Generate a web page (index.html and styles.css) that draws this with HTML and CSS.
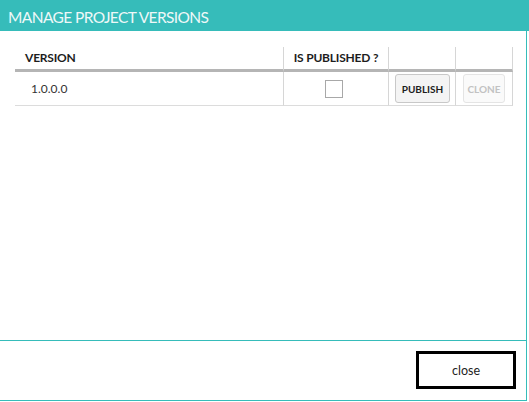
FILE: index.html
```html
<!DOCTYPE html>
<html>
<head>
<meta charset="utf-8">
<link rel="stylesheet" href="styles.css">
</head>
<body>
<div class="dialog">
  <div class="title-bar">MANAGE PROJECT VERSIONS</div>
  <div class="content">
    <div class="grid">
      <div class="cell head">VERSION</div>
      <div class="cell head center">IS PUBLISHED ?</div>
      <div class="cell head"></div>
      <div class="cell head"></div>

      <div class="cell row version">1.0.0.0</div>
      <div class="cell row check-cell"><span class="checkbox"></span></div>
      <div class="cell row btn-cell pub"><button class="btn">PUBLISH</button></div>
      <div class="cell row btn-cell cl"><button class="btn disabled">CLONE</button></div>
    </div>
  </div>
  <div class="footer">
    <button class="close">close</button>
  </div>
</div>
</body>
</html>
```

FILE: styles.css
```css
html, body {
  margin: 0;
  padding: 0;
  background: #fff;
}
body {
  width: 529px;
  height: 402px;
  overflow: hidden;
  font-family: Lato, "Open Sans", sans-serif;
}
.dialog {
  display: flex;
  flex-direction: column;
}
.title-bar {
  height: 31px;
  box-sizing: border-box;
  background: #36bcba;
  color: #eef8f8;
  font-size: 15.5px;
  font-weight: 400;
  line-height: 31px;
  padding: 2px 0 0 8px;
  letter-spacing: -0.6px;
}
.content {
  height: 309px;
  box-sizing: border-box;
  border-right: 1px solid #36bcba;
  width: 527px;
  padding: 16px 0 0 15px;
}
.grid {
  display: grid;
  grid-template-columns: 269px 105px 67px 57px;
  width: 498px;
}
.cell {
  border-right: 1px solid #d6d6d6;
  box-sizing: border-box;
  display: flex;
  align-items: center;
}
.head {
  height: 25px;
  border-bottom: 3px solid #b5b5b5;
  font-size: 12px;
  font-weight: 700;
  color: #1d1d1d;
  padding-left: 10px;
  padding-bottom: 2px;
  letter-spacing: -0.2px;
}
.head.center {
  justify-content: center;
  padding-left: 0;
}
.row {
  height: 34px;
  border-bottom: 1px solid #dcdcdc;
  font-size: 12px;
  color: #333;
}
.version {
  padding-left: 16px;
}
.check-cell {
  justify-content: center;
  padding-right: 5px;
}
.checkbox {
  width: 16px;
  height: 16px;
  border: 1px solid #a8a8a8;
  background: #fff;
  display: block;
}
.btn-cell.pub {
  padding-left: 6px;
}
.btn-cell.cl {
  padding-left: 7px;
}
.btn {
  height: 29px;
  padding: 0;
  border: 1px solid #c8c8c8;
  border-radius: 3px;
  background: #f4f4f4;
  font-family: Lato, "Open Sans", sans-serif;
  font-size: 10px;
  font-weight: 700;
  color: #1d1d1d;
}
.pub .btn {
  width: 55px;
}
.btn.disabled {
  width: 42px;
  color: #c2c2c2;
  border-color: #e4e4e4;
  background: #fafafa;
}
.footer {
  width: 527px;
  height: 61px;
  box-sizing: border-box;
  border-top: 1px solid #36bcba;
  border-bottom: 1px solid #36bcba;
  border-right: 1px solid #36bcba;
  display: flex;
  justify-content: flex-end;
  align-items: flex-start;
  padding: 10px 10px 0 0;
}
.close {
  width: 100px;
  height: 38px;
  border: 3px solid #000;
  background: #fff;
  font-family: Lato, "Open Sans", sans-serif;
  font-size: 12.5px;
  color: #222;
  padding: 0;
}
```
